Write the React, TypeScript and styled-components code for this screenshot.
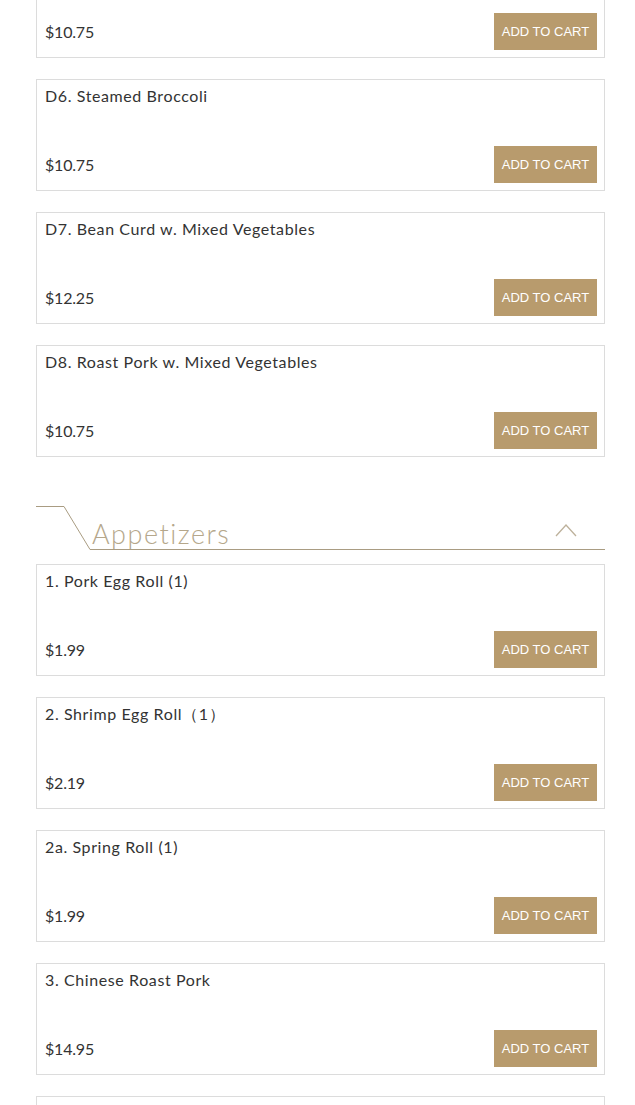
import styled, { createGlobalStyle } from "styled-components";

const GlobalStyle = createGlobalStyle`
  html, body {
    margin: 0;
    padding: 0;
    background: #ffffff;
    overflow: hidden;
  }
  body {
    font-family: Lato, "Noto Sans", "DejaVu Sans", sans-serif;
  }
`;

const StyledPage = styled.div`
  width: 569px;
  padding: 0 30px 0 36px;
  margin-top: -54px;
`;

const StyledSection = styled.section`
  display: flex;
  flex-direction: column;
`;

const StyledHeader = styled.div`
  display: flex;
  align-items: flex-end;
  height: 44px;
  margin: 28px 0 14px;
`;

const StyledHeaderLine = styled.svg`
  flex: none;
  display: block;
`;

const StyledHeaderTitle = styled.div`
  flex: 1;
  display: flex;
  align-items: flex-end;
  justify-content: space-between;
  border-bottom: 1px solid #a99c82;
  height: 100%;
  box-sizing: border-box;

  h2 {
    margin: 0 0 0 2px;
    font-family: Lato, "Noto Sans", sans-serif;
    font-weight: 300;
    font-size: 27px;
    letter-spacing: 1.5px;
    line-height: 30px;
    color: #b5a78b;
  }

  svg {
    margin: 0 28px 12px 0;
  }
`;

const StyledCard = styled.div`
  display: flex;
  flex-direction: column;
  justify-content: space-between;
  height: 112px;
  box-sizing: border-box;
  border: 1px solid #dcdcdc;
  padding: 7px 7px 7px 8px;
  margin-bottom: 21px;
`;

const StyledItemName = styled.div`
  font-size: 16px;
  line-height: 18px;
  letter-spacing: 0.6px;
  color: #333333;
`;

const StyledItemRow = styled.div`
  display: flex;
  align-items: center;
  justify-content: space-between;
`;

const StyledPrice = styled.span`
  font-size: 16px;
  color: #333333;
  letter-spacing: -0.2px;
`;

const StyledCartButton = styled.button`
  width: 103px;
  height: 37px;
  border: none;
  background-color: #b89b6d;
  color: #ffffff;
  font-family: "Liberation Sans", Arial, sans-serif;
  font-size: 13px;
  text-transform: uppercase;
  padding: 0;
  cursor: pointer;
`;

interface MenuItem {
  name: string;
  price: string;
}

const VEGETABLES: MenuItem[] = [
  { name: "D5. Mixed Chinese Vegetables", price: "$10.75" },
  { name: "D6. Steamed Broccoli", price: "$10.75" },
  { name: "D7. Bean Curd w. Mixed Vegetables", price: "$12.25" },
  { name: "D8. Roast Pork w. Mixed Vegetables", price: "$10.75" },
];

const APPETIZERS: MenuItem[] = [
  { name: "1. Pork Egg Roll (1)", price: "$1.99" },
  { name: "2. Shrimp Egg Roll（1）", price: "$2.19" },
  { name: "2a. Spring Roll (1)", price: "$1.99" },
  { name: "3. Chinese Roast Pork", price: "$14.95" },
  { name: "4. Boneless Spare Ribs", price: "$14.95" },
];

const ItemCard = ({ item }: { item: MenuItem }) => (
  <StyledCard>
    <StyledItemName>{item.name}</StyledItemName>
    <StyledItemRow>
      <StyledPrice>{item.price}</StyledPrice>
      <StyledCartButton>Add to cart</StyledCartButton>
    </StyledItemRow>
  </StyledCard>
);

const SectionHeader = ({ title }: { title: string }) => (
  <StyledHeader>
    <StyledHeaderLine width="54" height="44" viewBox="0 0 54 44">
      <polyline
        points="0,0.5 28,0.5 54,43.5"
        fill="none"
        stroke="#a99c82"
        strokeWidth="1"
      />
    </StyledHeaderLine>
    <StyledHeaderTitle>
      <h2>{title}</h2>
      <svg width="22" height="14" viewBox="0 0 22 14">
        <polyline
          points="1,13 11,2 21,13"
          fill="none"
          stroke="#bdb19b"
          strokeWidth="1.3"
        />
      </svg>
    </StyledHeaderTitle>
  </StyledHeader>
);

const App = () => {
  return (
    <>
      <GlobalStyle />
      <StyledPage>
        <StyledSection>
          {VEGETABLES.map((item) => (
            <ItemCard key={item.name} item={item} />
          ))}
        </StyledSection>

        <StyledSection>
          <SectionHeader title="Appetizers" />
          {APPETIZERS.map((item) => (
            <ItemCard key={item.name} item={item} />
          ))}
        </StyledSection>
      </StyledPage>
    </>
  );
};

export default App;
